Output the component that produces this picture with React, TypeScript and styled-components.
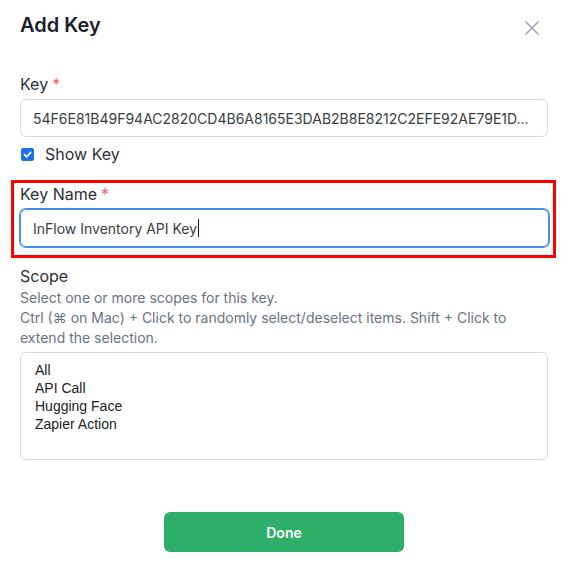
import { FC } from "react";
import styled, { createGlobalStyle } from "styled-components";

const GlobalStyle = createGlobalStyle`
    html, body {
        margin: 0;
        padding: 0;
        background: #ffffff;
    }
    body {
        font-family: Inter, "Noto Sans", sans-serif;
        -webkit-font-smoothing: antialiased;
    }
`;

const Dialog = styled.div`
    width: 568px;
    box-sizing: border-box;
    padding: 10px 20px 18px 20px;
    display: flex;
    flex-direction: column;
`;

const Header = styled.div`
    display: flex;
    align-items: center;
    justify-content: space-between;
    height: 30px;
`;

const Title = styled.h2`
    margin: 0;
    font-size: 20px;
    line-height: 28px;
    font-weight: 600;
    color: #1a202c;
`;

const CloseButton = styled.button`
    border: none;
    background: none;
    padding: 0;
    margin-right: 8px;
    margin-top: 6px;
    width: 16px;
    height: 16px;
    display: flex;
    align-items: center;
    justify-content: center;
    cursor: pointer;
`;

const Field = styled.div<{ $offset?: number }>`
    display: flex;
    flex-direction: column;
    gap: 3px;
    margin-top: ${({ $offset }) => $offset ?? 0}px;
`;

const Highlight = styled.div`
    margin: 14px -8px 0 -9px;
    padding: 0 4px 8px 6px;
    border: 3px solid #ff0000;
`;

const Label = styled.label`
    font-size: 16px;
    line-height: 24px;
    color: #2d3036;
`;

const Required = styled.span`
    color: #f56565;
    margin-left: 4px;
`;

const TextBox = styled.div<{ $focused?: boolean }>`
    height: 38px;
    box-sizing: border-box;
    border-radius: 6px;
    border: 1px solid ${({ $focused }) => ($focused ? "#4a8fe7" : "#d7dae0")};
    box-shadow: ${({ $focused }) => ($focused ? "0 0 0 1px #4a8fe7" : "none")};
    padding: 0 12px;
    display: flex;
    align-items: center;
    font-size: 14px;
    color: #3a3d42;
    white-space: nowrap;
    overflow: hidden;
`;

const Caret = styled.span`
    display: inline-block;
    width: 1px;
    height: 18px;
    background: #1a1a1a;
    margin-left: 1px;
`;

const CheckRow = styled.label`
    display: flex;
    align-items: center;
    gap: 11px;
    margin-top: 5px;
    font-size: 16px;
    line-height: 24px;
    color: #2d3036;
`;

const CheckBox = styled.span`
    width: 13px;
    height: 13px;
    margin-left: 1px;
    border-radius: 2px;
    background: #1a73e8;
    display: flex;
    align-items: center;
    justify-content: center;
`;

const ScopeField = styled(Field)`
    margin-top: 6px;
    gap: 0;
`;

const Help = styled.p`
    margin: 0;
    font-size: 14px;
    line-height: 20px;
    color: #6b7280;
`;

const ListBox = styled.div`
    margin-top: 4px;
    height: 108px;
    box-sizing: border-box;
    border: 1px solid #d7dae0;
    border-radius: 6px;
    padding: 8px 14px;
    display: flex;
    flex-direction: column;
`;

const Option = styled.div`
    font-family: "Liberation Sans", Arial, sans-serif;
    font-size: 14px;
    line-height: 18px;
    color: #222222;
`;

const Footer = styled.div`
    display: flex;
    justify-content: center;
    margin-top: 52px;
`;

const DoneButton = styled.button`
    width: 240px;
    height: 40px;
    border: none;
    border-radius: 6px;
    background: #2daf6a;
    color: #ffffff;
    font-family: Inter, "Noto Sans", sans-serif;
    font-size: 14px;
    font-weight: 600;
    cursor: pointer;
`;

const scopes = ["All", "API Call", "Hugging Face", "Zapier Action"];

const App: FC = () => {
    return (
        <>
            <GlobalStyle />
            <Dialog>
                <Header>
                    <Title>Add Key</Title>
                    <CloseButton aria-label="Close">
                        <svg width="14" height="14" viewBox="0 0 14 14">
                            <path d="M1 1L13 13M13 1L1 13" stroke="#a0a5b0" strokeWidth="1.6" strokeLinecap="round" />
                        </svg>
                    </CloseButton>
                </Header>

                <Field $offset={32}>
                    <Label>Key<Required>*</Required></Label>
                    <TextBox>54F6E81B49F94AC2820CD4B6A8165E3DAB2B8E8212C2EFE92AE79E1D...</TextBox>
                </Field>

                <CheckRow>
                    <CheckBox>
                        <svg width="9" height="9" viewBox="0 0 10 10">
                            <path d="M1.5 5.2L4 7.6L8.6 2.6" stroke="#ffffff" strokeWidth="1.8" fill="none" strokeLinecap="round" strokeLinejoin="round" />
                        </svg>
                    </CheckBox>
                    Show Key
                </CheckRow>

                <Highlight>
                    <Field $offset={-1}>
                        <Label>Key Name<Required>*</Required></Label>
                        <TextBox $focused>InFlow Inventory API Key<Caret /></TextBox>
                    </Field>
                </Highlight>

                <ScopeField>
                    <Label>Scope</Label>
                    <Help>Select one or more scopes for this key.</Help>
                    <Help>Ctrl (⌘ on Mac) + Click to randomly select/deselect items. Shift + Click to extend the selection.</Help>
                    <ListBox>
                        {scopes.map((s) => (
                            <Option key={s}>{s}</Option>
                        ))}
                    </ListBox>
                </ScopeField>

                <Footer>
                    <DoneButton>Done</DoneButton>
                </Footer>
            </Dialog>
        </>
    );
};

export default App;
